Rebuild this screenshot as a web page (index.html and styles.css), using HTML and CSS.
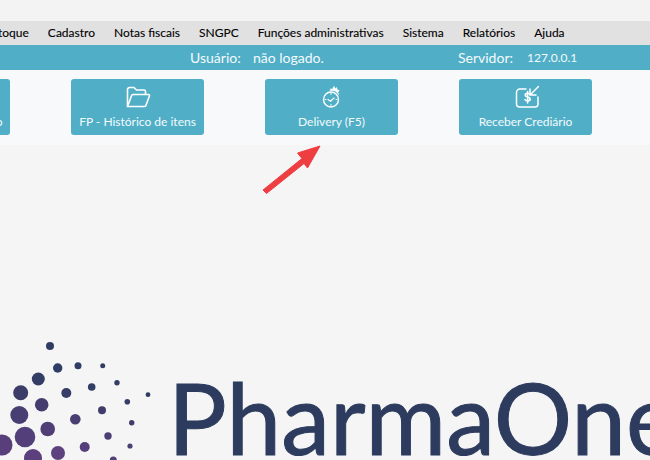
FILE: index.html
```html
<!DOCTYPE html>
<html lang="pt-BR">
<head>
<meta charset="utf-8">
<title>PharmaOne</title>
<link rel="stylesheet" href="styles.css">
</head>
<body>
<div class="app">
  <div class="titlebar"></div>
  <nav class="menu">
    <span>Estoque</span><span>Cadastro</span><span>Notas fiscais</span><span>SNGPC</span><span>Funções administrativas</span><span>Sistema</span><span>Relatórios</span><span>Ajuda</span>
  </nav>
  <div class="status">
    <span class="user-label">Usuário:</span><span class="user-value">não logado.</span>
    <span class="server-label">Servidor:</span><span class="server-value">127.0.0.1</span>
  </div>
  <div class="toolbar">
    <div class="btn">
      <svg class="icon" viewBox="0 0 26 24"></svg>
      <span>FP - Venda de produto</span>
    </div>
    <div class="btn">
      <svg class="icon" viewBox="0 0 26 24" fill="none" stroke="#fff" stroke-width="1.6" stroke-linejoin="round" stroke-linecap="round">
        <path d="M2.500 21V4.500a2 2 0 0 1 2-2h4.500l2.500 2.500h7.500a1.500 1.500 0 0 1 1.500 1.500V9"/>
        <path d="M2.500 21.500h17a1.500 1.500 0 0 0 1.400-1L24.500 10.800a1 1 0 0 0-1-1.300H8a1.500 1.500 0 0 0-1.400 1L2.500 21.500z"/>
      </svg>
      <span>FP - Histórico de itens</span>
    </div>
    <div class="btn">
      <svg class="icon" viewBox="0 0 26 24" fill="none" stroke="#fff" stroke-linecap="round" stroke-linejoin="round">
        <circle cx="12" cy="14.500" r="7.500" stroke-width="1.400"/>
        <path d="M9 14.500l2.500 1.800 3.500-3.300" stroke-width="1.200"/>
        <path d="M12 8.500v1M12 19.500v1M6 14.500h1M17 14.500h1" stroke-width="1"/>
        <path d="M10.500 6l1.500-3 1 1.500L15 .8l1.300 2.700 1.700-1.500.4 2.700 2.100.3-1.300 2.500 1.300 3.300-3.500-4C15.500 5.800 13 5.500 10.500 6z" fill="#fff" stroke="none"/>
      </svg>
      <span>Delivery (F5)</span>
    </div>
    <div class="btn">
      <svg class="icon" viewBox="0 0 26 24" fill="none" stroke="#fff" stroke-width="1.500" stroke-linecap="round" stroke-linejoin="round">
        <path d="M13 4H7a3.500 3.500 0 0 0-3.500 3.500v11.500a3 3 0 0 0 3 3h15.500a3 3 0 0 0 3-3V12"/>
        <path d="M25.500 1.500l-8.500 8.500M17 4v6h6"/>
        <path d="M17 9.500c-.4-.8-1.300-1.200-2.400-1.200-1.300 0-2.400.7-2.400 1.800 0 2.700 5 1.300 5 4 0 1.100-1.100 1.800-2.500 1.800-1.200 0-2.200-.5-2.700-1.300M14.600 6.500v11.500" stroke-width="1.600"/>
      </svg>
      <span>Receber Crediário</span>
    </div>
  </div>
  <main class="home">
    <svg class="mark" viewBox="0 0 176 130" aria-hidden="true">
      <circle cx="50" cy="16" r="4" fill="#2f3d64"/>
      <circle cx="57.700" cy="38" r="4.700" fill="#2f3d64"/>
      <circle cx="78" cy="35.700" r="3.500" fill="#2f3d64"/>
      <circle cx="102.700" cy="35.700" r="2.500" fill="#2f3d64"/>
      <circle cx="38.300" cy="49" r="6.500" fill="#333d66"/>
      <circle cx="20.700" cy="62.700" r="7.500" fill="#3c3c68"/>
      <circle cx="66.300" cy="63" r="5" fill="#363d66"/>
      <circle cx="91.700" cy="57" r="3.800" fill="#333d66"/>
      <circle cx="117" cy="52.700" r="2.700" fill="#313d65"/>
      <circle cx="148" cy="64.700" r="2.400" fill="#2f3d64"/>
      <circle cx="127.300" cy="71.700" r="2.800" fill="#3a3c68"/>
      <circle cx="41.700" cy="74.700" r="6.800" fill="#443d6e"/>
      <circle cx="102" cy="80.300" r="4" fill="#403c6b"/>
      <circle cx="19.300" cy="85" r="9" fill="#483e72"/>
      <circle cx="75.300" cy="89.300" r="5.300" fill="#483e72"/>
      <circle cx="131.700" cy="92.700" r="2.700" fill="#413c6c"/>
      <circle cx="47.700" cy="99" r="7.300" fill="#4f3f76"/>
      <circle cx="108" cy="106" r="3.700" fill="#4c3f74"/>
      <circle cx="25" cy="107" r="10.300" fill="#533f79"/>
      <circle cx="2" cy="115" r="10.500" fill="#583f7c"/>
      <circle cx="84.700" cy="117" r="5" fill="#563f7b"/>
      <circle cx="130" cy="116" r="2.600" fill="#4c3f74"/>
      <circle cx="58" cy="123" r="7" fill="#5e417f"/>
      <circle cx="33" cy="128" r="9" fill="#5c407e"/>
      <circle cx="113.300" cy="130" r="3.500" fill="#55407a"/>
    </svg>
    <div class="brand">PharmaOne</div>
  </main>
  <svg class="arrow" viewBox="0 0 70 60" aria-hidden="true">
    <path d="M1 45 L40 13.500 L35.500 8 L58 1 L45.500 23 L42 18.500 L4.500 48.500 Z" fill="#ef3e42" stroke="#ef3e42" stroke-width="1" stroke-linejoin="round"/>
  </svg>
</div>
</body>
</html>
```
FILE: styles.css
```css
* { box-sizing: border-box; }
html, body { margin: 0; height: 100%; overflow: hidden; }
body { font-family: Lato, "Noto Sans", sans-serif; background: #f5f5f5; }
.app { position: relative; width: 650px; height: 460px; overflow: hidden; display: flex; flex-direction: column; }
.titlebar { height: 21px; background: #f3f3f3; flex: none; }
.menu {
  height: 24px; flex: none; background: #e1e1e1; display: flex; align-items: center;
  gap: 19px; margin-left: -14px; padding-bottom: 2px; font-size: 12px; color: #000; white-space: nowrap; -webkit-text-stroke: 0.1px #000;
}
.status {
  height: 25px; flex: none; background: #50afc7; color: #f4fafc; display: flex; align-items: center;
  font-size: 14px; white-space: nowrap; padding-left: 190px;
}
.user-label { width: 63px; }
.user-value { width: 205px; }
.server-label { width: 69px; }
.server-value { font-size: 12px; }
.toolbar {
  height: 75px; flex: none; background: #f8f9fb; display: flex; gap: 61px;
  padding-top: 9px; margin-left: -123px;
}
.btn {
  width: 133px; height: 56px; flex: none; background: #50afc7; border-radius: 3px; color: #f4fafc;
  display: flex; flex-direction: column; align-items: center;
  font-size: 12px; line-height: 16px; padding-top: 6px; white-space: nowrap; gap: 5px;
}
.icon { width: 26px; height: 24px; display: block; flex: none; }
.home { flex: 1; display: flex; padding-top: 185px; overflow: hidden; align-items: flex-start; }
.mark { width: 176px; height: 130px; flex: none; overflow: visible; }
.brand {
  font-size: 98px; line-height: 1; color: #2d3b5e; white-space: nowrap; margin-top: 38px; margin-left: -8px; -webkit-text-stroke: 1px #2d3b5e;
}
.arrow { position: absolute; left: 262px; top: 145px; width: 70px; height: 60px; }
```
